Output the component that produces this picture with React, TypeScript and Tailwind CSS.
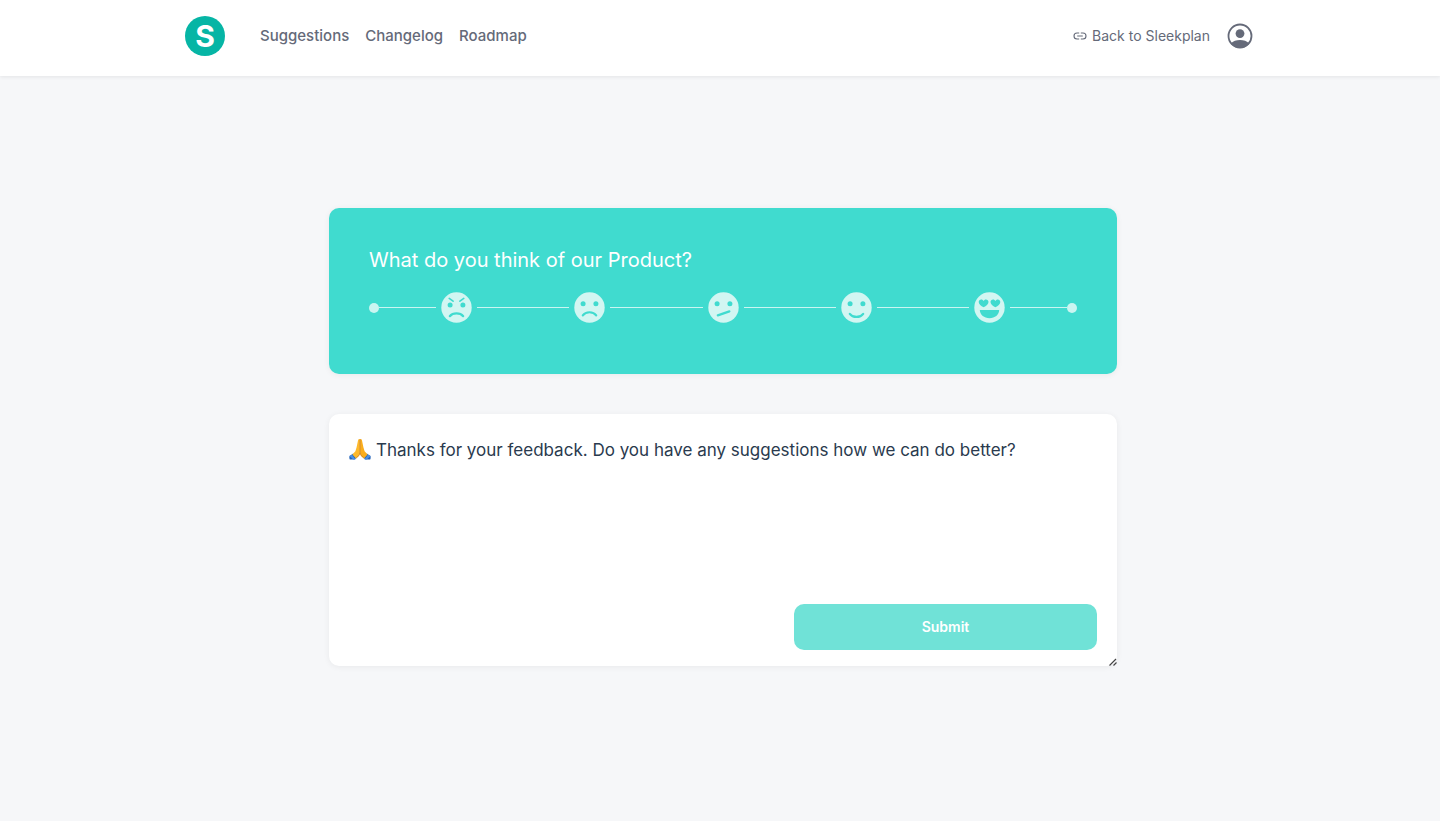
import { Fragment, useState } from "react";
import type { ReactNode } from "react";

const cut = "#40dbcf";

function Eyes() {
  return (
    <g fill={cut}>
      <circle cx="9.1" cy="11.7" r="2.5" />
      <circle cx="21.9" cy="11.7" r="2.5" />
    </g>
  );
}

const stroke = { stroke: cut, strokeWidth: 2.2, strokeLinecap: "round", fill: "none" } as const;
const heart = "M0 4.1C-2.6 2.6-4.9 1-4.9-1.2C-4.9-2.8-3.8-3.8-2.4-3.8C-1.3-3.8-.4-3.2 0-2.3C.4-3.2 1.3-3.8 2.4-3.8C3.8-3.8 4.9-2.8 4.9-1.2C4.9 1 2.6 2.6 0 4.1Z";

const moods: { name: string; face: ReactNode }[] = [
  {
    name: "Angry",
    face: (
      <>
        <g fill={cut}>
          <circle cx="9.1" cy="13" r="2.5" />
          <circle cx="21.9" cy="13" r="2.5" />
        </g>
        <path d="M8.2 6.4l3.9 2.8M22.8 6.4l-3.9 2.8" {...stroke} strokeWidth={1.6} />
        <path d="M8.8 24.2C11.8 20.4 19.2 20.4 22.2 24.2" {...stroke} />
      </>
    ),
  },
  {
    name: "Sad",
    face: (
      <>
        <Eyes />
        <path d="M8.8 23.4C11.8 19.2 19.2 19.2 22.2 23.4" {...stroke} />
      </>
    ),
  },
  {
    name: "Unsure",
    face: (
      <>
        <Eyes />
        <path d="M9.8 23.4L21.4 19.4" {...stroke} />
      </>
    ),
  },
  {
    name: "Happy",
    face: (
      <>
        <Eyes />
        <path d="M8.8 21.8C11.8 26 19.2 26 22.2 21.8" {...stroke} />
      </>
    ),
  },
  {
    name: "In love",
    face: (
      <g fill={cut}>
        <path d={heart} transform="translate(9.6 11.2)" />
        <path d={heart} transform="translate(21.4 11.2)" />
        <path d="M5.8 18H25.2C25 22.8 20.9 26.2 15.5 26.2S6 22.8 5.8 18Z" />
      </g>
    ),
  },
];

function Dot() {
  return <span className="size-2.5 shrink-0 rounded-full bg-[#caf5f1]" />;
}

function LinkIcon() {
  return (
    <svg viewBox="0 0 14 8" className="h-2 w-3.5" fill="none" stroke="currentColor" strokeWidth="1.1" aria-hidden="true">
      <path d="M6.2 1H4a3 3 0 0 0 0 6h2.2M7.8 1H10a3 3 0 0 1 0 6H7.8M4.2 4h5.6" />
    </svg>
  );
}

function AccountIcon() {
  return (
    <svg viewBox="0 0 26 26" className="size-[26px]" aria-hidden="true">
      <clipPath id="account-ring">
        <circle cx="13" cy="13" r="12" />
      </clipPath>
      <circle cx="13" cy="13" r="11.5" fill="none" stroke="currentColor" strokeWidth="1.8" />
      <circle cx="13" cy="10.6" r="4.4" fill="currentColor" />
      <path d="M3.5 21C6 17.7 9.5 16.9 13 16.9S20 17.7 22.5 21L20 26H6Z" fill="currentColor" clipPath="url(#account-ring)" />
    </svg>
  );
}

function PrayIcon() {
  return (
    <svg viewBox="0 0 22 22" className="size-[22px]" aria-hidden="true">
      <path d="M4.2 15.4L8 19.6L5.6 21.6H.8C.3 20.6.2 19 .5 18Z" fill="#2563b8" />
      <path d="M17.8 15.4L14 19.6L16.4 21.6H21.2C21.7 20.6 21.8 19 21.5 18Z" fill="#2563b8" />
      <path d="M.5 18L3 16.8L6.6 21.6H4.2Z" fill="#4a8fe4" />
      <path d="M21.5 18L19 16.8L15.4 21.6H17.8Z" fill="#4a8fe4" />
      <path d="M10.9 1.2C10 .8 9.2 1.4 9 2.6L7.6 9.2L6.4 13.2L3.4 16.6L7 20.6C9.2 19 10.9 17.2 10.9 14.6Z" fill="#fdb92c" />
      <path d="M11.1 1.2C12 .8 12.8 1.4 13 2.6L14.4 9.2L15.6 13.2L18.6 16.6L15 20.6C12.8 19 11.1 17.2 11.1 14.6Z" fill="#f9ad1d" />
      <path d="M11 1.4V14.8M11 14.8C10.6 17 9 18.6 7.4 19.8M11 14.8C11.4 17 13 18.6 14.6 19.8" stroke="#c9781a" strokeWidth=".8" fill="none" />
    </svg>
  );
}

export default function App() {
  const [mood, setMood] = useState<string | null>(null);

  return (
    <div className="min-h-screen bg-[#f6f7f9] font-[Inter,sans-serif]">
      <header className="bg-white shadow-[0_1px_4px_rgba(0,0,0,0.08)]">
        <div className="mx-auto flex h-[76px] max-w-[1070px] items-center justify-between pr-0.5 pb-1">
          <div className="flex items-center gap-[35px]">
            <a
              href="#"
              aria-label="Home"
              className="flex size-10 items-center justify-center rounded-full bg-[#06b5a5] text-[30px] leading-10 font-bold text-white"
            >
              S
            </a>
            <nav className="flex gap-4 text-[15px] font-medium text-[#656a79]">
              <a href="#">Suggestions</a>
              <a href="#">Changelog</a>
              <a href="#">Roadmap</a>
            </nav>
          </div>
          <div className="flex items-center gap-[17px] text-[#656a79]">
            <a href="#" className="flex items-center gap-[5px] text-sm">
              <LinkIcon />
              Back to Sleekplan
            </a>
            <button type="button" aria-label="Account">
              <AccountIcon />
            </button>
          </div>
        </div>
      </header>

      <main className="flex justify-center pt-[132px] pb-10 pl-1.5">
        <div className="flex w-full max-w-[788px] flex-col gap-10">
          <section className="rounded-[10px] bg-[#40dbcf] px-10 pt-9 pb-[51px] shadow-[0_1px_6px_rgba(0,0,0,0.06)]">
            <h1 className="text-xl leading-8 text-white">What do you think of our Product?</h1>
            <div className="mt-4 flex items-center">
              <Dot />
              {moods.map(({ name, face }, i) => (
                <Fragment key={name}>
                  <span className={i === 0 ? "h-px grow-57 basis-0 bg-[#caf5f1]" : "h-px grow-92 basis-0 bg-[#caf5f1]"} />
                  <button
                    type="button"
                    aria-label={name}
                    aria-pressed={mood === name}
                    onClick={() => setMood(name)}
                    className="mx-[5px] shrink-0 rounded-full"
                  >
                    <svg viewBox="0 0 31 31" className="size-[31px]" aria-hidden="true">
                      <circle cx="15.5" cy="15.5" r="15.2" fill="#d2f6f2" />
                      {face}
                    </svg>
                  </button>
                </Fragment>
              ))}
              <span className="h-px grow-57 basis-0 bg-[#caf5f1]" />
              <Dot />
            </div>
          </section>

          <form className="relative" onSubmit={(e) => e.preventDefault()}>
            <span className="absolute top-6 left-5">
              <PrayIcon />
            </span>
            <textarea
              aria-label="Feedback"
              placeholder="Thanks for your feedback. Do you have any suggestions how we can do better?"
              className="block h-[252px] w-full resize-none rounded-[10px] bg-white py-[22px] pr-5 pl-[47px] text-[17px] leading-7 text-[#2a3a4e] shadow-[0_1px_6px_rgba(0,0,0,0.06)] outline-none placeholder:text-[#2a3a4e]"
            />
            <button
              type="submit"
              className="absolute right-5 bottom-4 h-[46px] w-[303px] rounded-[10px] bg-[#70e2d7] text-sm font-semibold text-white"
            >
              Submit
            </button>
            <svg viewBox="0 0 8 8" className="absolute right-0 bottom-0 size-2" stroke="#444" strokeWidth="1.2" aria-hidden="true">
              <path d="M.5 7.5L7 1M4.5 7.5L7.5 4.5" />
            </svg>
          </form>
        </div>
      </main>
    </div>
  );
}
